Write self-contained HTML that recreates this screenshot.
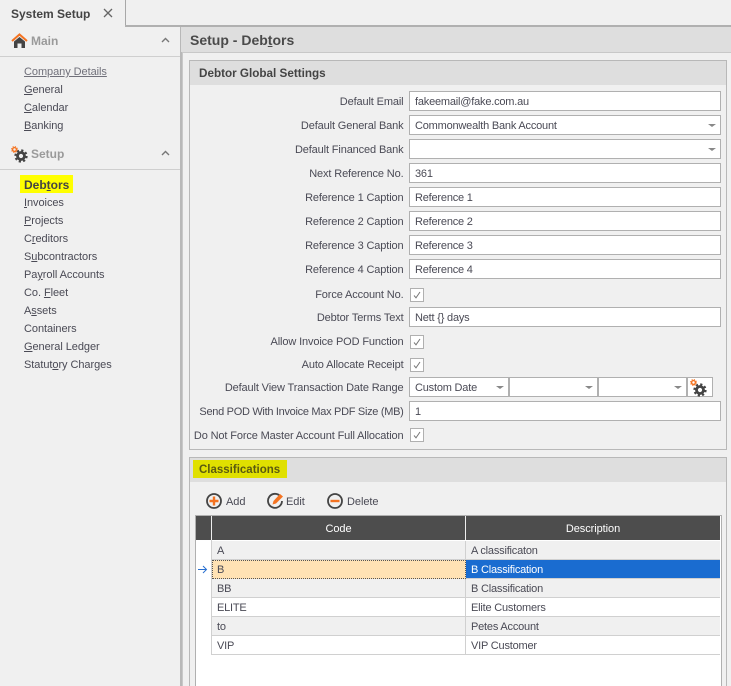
<!DOCTYPE html>
<html style="overflow:hidden;height:686px"><head><meta charset="utf-8"><style>
html,body{margin:0;padding:0}
body{width:731px;height:686px;overflow:hidden;position:relative;background:#f0f0f0;font:11px/20px "Liberation Sans",sans-serif;color:#4a4a55}
div,svg{position:absolute}
.t{white-space:nowrap;height:18px;letter-spacing:-.06px}
.b{font-weight:bold;letter-spacing:0}
.l{right:327.5px;white-space:nowrap;height:18px;text-align:right;letter-spacing:-.13px}
.i{left:409px;width:310px;height:18px;background:#fff;border:1px solid #b0b0b0;padding-left:0}
.i span{position:absolute;left:5px;top:0;white-space:nowrap;letter-spacing:-.2px}
.a{position:absolute;width:0;height:0;border-left:4px solid transparent;border-right:4px solid transparent;border-top:3px solid #888}
.c{left:410px;width:12px;height:12px;background:#fff;border:1px solid #b0b0b0}
u{text-underline-offset:1px}
.r{left:212px;width:508px;height:18px;border-bottom:1px solid #d0d0d0;letter-spacing:-.2px}
.cc{position:absolute;left:5px;top:0}
.dd{position:absolute;left:259px;top:0}
.sep{position:absolute;left:253px;top:0;width:1px;height:19px;background:#d0d0d0}
</style></head><body>
<svg width="0" height="0" style="position:absolute"><defs>
<symbol id="gear" viewBox="0 0 16 16"><circle cx="8" cy="8" r="4" fill="none" stroke="#444" stroke-width="3.2"/><circle cx="8" cy="8" r="6.4" fill="none" stroke="#444" stroke-width="2.4" stroke-dasharray="2.5 2.53"/></symbol>
<symbol id="ogear" viewBox="0 0 8 8"><circle cx="4" cy="4" r="2.2" fill="none" stroke="#f47321" stroke-width="1.6"/><circle cx="4" cy="4" r="3.4" fill="none" stroke="#f47321" stroke-width="1.1" stroke-dasharray="1.3 1.37"/></symbol>
</defs></svg>

<!-- top tab -->
<div style="left:125px;top:0;width:1px;height:25px;background:#a8a8a8"></div>
<div style="left:125px;top:25px;width:606px;height:2px;background:#b0b0b0"></div>
<div class="t b" style="left:11px;top:4px;font-size:12px;color:#444">System Setup</div>
<svg style="left:103px;top:8px" width="10" height="10"><path d="M1 1L9 9M9 1L1 9" stroke="#666" stroke-width="1.3" fill="none"/></svg>

<!-- sidebar -->
<div style="left:180px;top:27px;width:2px;height:659px;background:#b8b8b8"></div>
<svg style="left:11px;top:33px" width="17" height="16"><path d="M1 8L8.500 1.500L16 8" fill="none" stroke="#f47321" stroke-width="2"/><path d="M3 8.500L8.500 4L14 8.500V15H10.500V10.500H6.500V15H3Z" fill="#444"/></svg>
<div class="t b" style="left:31px;top:31px;font-size:12px;color:#9a9a9a">Main</div>
<svg style="left:161px;top:37px" width="9" height="7"><path d="M1 5L4.500 1.500L8 5" fill="none" stroke="#777" stroke-width="1.4"/></svg>
<div style="left:0;top:56px;width:180px;height:1px;background:#cfcfcf"></div>
<div class="t" style="left:24px;top:62px;color:#70707a"><u>Company Details</u></div>
<div class="t" style="left:24px;top:80px"><u>G</u>eneral</div>
<div class="t" style="left:24px;top:98px"><u>C</u>alendar</div>
<div class="t" style="left:24px;top:116px"><u>B</u>anking</div>

<svg style="left:14px;top:149px" width="14" height="14"><use href="#gear"/></svg>
<svg style="left:11px;top:146px" width="7" height="7"><use href="#ogear"/></svg>
<div class="t b" style="left:31px;top:144px;font-size:12px;color:#9a9a9a">Setup</div>
<svg style="left:161px;top:150px" width="9" height="7"><path d="M1 5L4.500 1.500L8 5" fill="none" stroke="#777" stroke-width="1.4"/></svg>
<div style="left:0;top:169px;width:180px;height:1px;background:#cfcfcf"></div>
<div style="left:20px;top:175px;width:53px;height:18px;background:#ffff00"></div>
<div class="t b" style="left:24px;top:175px;font-size:12px;color:#444">Deb<u>t</u>ors</div>
<div class="t" style="left:24px;top:193px"><u>I</u>nvoices</div>
<div class="t" style="left:24px;top:211px"><u>P</u>rojects</div>
<div class="t" style="left:24px;top:229px">C<u>r</u>editors</div>
<div class="t" style="left:24px;top:247px">S<u>u</u>bcontractors</div>
<div class="t" style="left:24px;top:265px">Pa<u>y</u>roll Accounts</div>
<div class="t" style="left:24px;top:283px">Co. <u>F</u>leet</div>
<div class="t" style="left:24px;top:301px">A<u>s</u>sets</div>
<div class="t" style="left:24px;top:319px">Containers</div>
<div class="t" style="left:24px;top:337px"><u>G</u>eneral Ledger</div>
<div class="t" style="left:24px;top:355px">Statut<u>o</u>ry Charges</div>

<!-- main title -->
<div style="left:181px;top:27px;width:550px;height:25px;background:#dedede"></div>
<div style="left:182px;top:52px;width:549px;height:1px;background:#c8c8c8"></div>
<div style="left:182px;top:52px;width:1px;height:634px;background:#c8c8c8"></div>
<div class="t b" style="left:190px;top:30px;font-size:14px;color:#4a4a4a">Setup - Deb<u>t</u>ors</div>

<!-- panel 1 -->
<div style="left:189px;top:60px;width:536px;height:388px;border:1px solid #b8b8b8;background:#f0f0f0"></div>
<div style="left:190px;top:61px;width:536px;height:24px;background:#dedede"></div>
<div class="t b" style="left:199px;top:64px;color:#444;font-size:11.7px">Debtor Global Settings</div>

<div class="l" style="top:92px">Default Email</div>
<div class="i" style="top:91px"><span>fakeemail@fake.com.au</span></div>
<div class="l" style="top:116px">Default General Bank</div>
<div class="i" style="top:115px"><span>Commonwealth Bank Account</span><i class="a" style="left:298px;top:8px"></i></div>
<div class="l" style="top:140px">Default Financed Bank</div>
<div class="i" style="top:139px"><i class="a" style="left:298px;top:8px"></i></div>
<div class="l" style="top:164px">Next Reference No.</div>
<div class="i" style="top:163px"><span>361</span></div>
<div class="l" style="top:188px">Reference 1 Caption</div>
<div class="i" style="top:187px"><span>Reference 1</span></div>
<div class="l" style="top:212px">Reference 2 Caption</div>
<div class="i" style="top:211px"><span>Reference 2</span></div>
<div class="l" style="top:236px">Reference 3 Caption</div>
<div class="i" style="top:235px"><span>Reference 3</span></div>
<div class="l" style="top:260px">Reference 4 Caption</div>
<div class="i" style="top:259px"><span>Reference 4</span></div>
<div class="l" style="top:285px">Force Account No.</div>
<div class="c" style="top:288px"><svg style="left:2px;top:2px" width="8" height="8"><path d="M1 4.500L3 6.800L7 1" fill="none" stroke="#777" stroke-width="1"/></svg></div>
<div class="l" style="top:308px">Debtor Terms Text</div>
<div class="i" style="top:307px"><span>Nett {} days</span></div>
<div class="l" style="top:332px">Allow Invoice POD Function</div>
<div class="c" style="top:335px"><svg style="left:2px;top:2px" width="8" height="8"><path d="M1 4.500L3 6.800L7 1" fill="none" stroke="#777" stroke-width="1"/></svg></div>
<div class="l" style="top:355px">Auto Allocate Receipt</div>
<div class="c" style="top:358px"><svg style="left:2px;top:2px" width="8" height="8"><path d="M1 4.500L3 6.800L7 1" fill="none" stroke="#777" stroke-width="1"/></svg></div>
<div class="l" style="top:378px">Default View Transaction Date Range</div>
<div class="i" style="top:377px;width:98px"><span>Custom Date</span><i class="a" style="left:86px;top:8px"></i></div>
<div class="i" style="top:377px;left:509px;width:87px"><i class="a" style="left:75px;top:8px"></i></div>
<div class="i" style="top:377px;left:598px;width:87px"><i class="a" style="left:75px;top:8px"></i></div>
<div class="i" style="top:377px;left:687px;width:24px"></div>
<svg style="left:693px;top:383px" width="14" height="14"><use href="#gear"/></svg>
<svg style="left:690px;top:379px" width="7" height="7"><use href="#ogear"/></svg>
<div class="l" style="top:402px;letter-spacing:-.3px">Send POD With Invoice Max PDF Size (MB)</div>
<div class="i" style="top:401px"><span>1</span></div>
<div class="l" style="top:426px">Do Not Force Master Account Full Allocation</div>
<div class="c" style="top:428px"><svg style="left:2px;top:2px" width="8" height="8"><path d="M1 4.500L3 6.800L7 1" fill="none" stroke="#777" stroke-width="1"/></svg></div>

<!-- panel 2 -->
<div style="left:189px;top:457px;width:536px;height:229px;border:1px solid #b8b8b8;border-bottom:0;background:#f0f0f0"></div>
<div style="left:190px;top:458px;width:536px;height:24px;background:#dedede"></div>
<div style="left:193px;top:460px;width:94px;height:18px;background:#e0e000"></div>
<div class="t b" style="left:199px;top:460px;color:#5a5a10;font-size:11.5px">Classifications</div>

<svg style="left:205px;top:492px" width="18" height="18"><circle cx="9" cy="9" r="7" fill="none" stroke="#444" stroke-width="1.8"/><path d="M9 4.500V13.500M4.500 9H13.500" stroke="#f47321" stroke-width="2.4" fill="none"/></svg>
<div class="t" style="left:226px;top:492px">Add</div>
<svg style="left:266px;top:491px" width="20" height="19"><path d="M14.500 5.500A7 7 0 1 0 16 10" fill="none" stroke="#444" stroke-width="1.8"/><path d="M6.500 13.500L7.500 10L14 3L17 5.500L10 12.500Z" fill="#f47321"/></svg>
<div class="t" style="left:286px;top:492px">Edit</div>
<svg style="left:326px;top:492px" width="18" height="18"><circle cx="9" cy="9" r="7" fill="none" stroke="#444" stroke-width="1.8"/><path d="M4.500 9H13.500" stroke="#f47321" stroke-width="2.4" fill="none"/></svg>
<div class="t" style="left:347px;top:492px">Delete</div>

<!-- grid -->
<div style="left:195px;top:515px;width:525px;height:171px;border:1px solid #b0b0b0;border-bottom:0;background:#fff"></div>
<div style="left:196px;top:516px;width:524px;height:24px;background:#4d4d4d"></div>
<div style="left:211px;top:516px;width:1px;height:24px;background:#eee"></div>
<div style="left:465px;top:516px;width:1px;height:24px;background:#eee"></div>
<div class="t" style="left:212px;width:253px;top:519px;text-align:center;color:#fff">Code</div>
<div class="t" style="left:466px;width:254px;top:519px;text-align:center;color:#fff">Description</div>
<div style="left:211px;top:540px;width:1px;height:115px;background:#d0d0d0"></div>

<div class="r" style="top:541px;background:#f0f0f0"><span class="cc">A</span><span class="dd">A classificaton</span><i class="sep"></i></div>
<div class="r" style="top:560px;background:#fff"></div>
<div style="left:212px;top:560px;width:252px;height:17px;background:#ffe2b4;border:1px dotted #555"></div>
<div class="t" style="left:217px;top:560px">B</div>
<div style="left:466px;top:560px;width:254px;height:18px;background:#1a6cd0"></div>
<div class="t" style="left:471px;top:560px;color:#fff;letter-spacing:-.2px">B Classification</div>
<svg style="left:198px;top:565px" width="10" height="9"><path d="M0 4.500H8.500M5 1L8.500 4.500L5 8" fill="none" stroke="#2a70d0" stroke-width="1"/></svg>
<div class="r" style="top:579px;background:#f0f0f0"><span class="cc">BB</span><span class="dd">B Classification</span><i class="sep"></i></div>
<div class="r" style="top:598px;background:#fff"><span class="cc">ELITE</span><span class="dd">Elite Customers</span><i class="sep"></i></div>
<div class="r" style="top:617px;background:#f0f0f0"><span class="cc">to</span><span class="dd">Petes Account</span><i class="sep"></i></div>
<div class="r" style="top:636px;background:#fff"><span class="cc">VIP</span><span class="dd">VIP Customer</span><i class="sep"></i></div>
</body></html>
